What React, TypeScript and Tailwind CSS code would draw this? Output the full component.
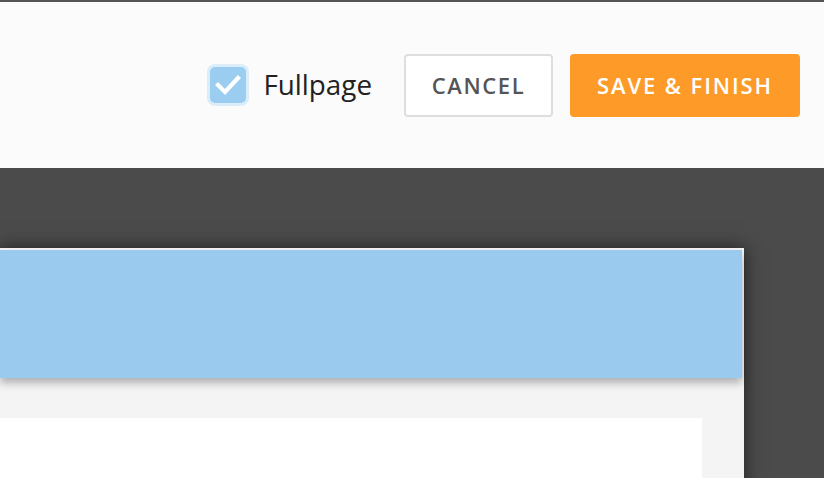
import React from "react";

export default function App() {
  return (
    <div
      className="w-[824px] h-[478px] overflow-hidden bg-[#4b4b4b] flex flex-col"
      style={{ fontFamily: '"Open Sans", "Liberation Sans", sans-serif' }}
    >
      <div className="h-[2px] bg-[#555555] shrink-0" />
      <header className="h-[166px] shrink-0 bg-[#fbfbfb] flex items-center justify-end pr-[24px]">
        <label className="flex items-center">
          <span className="w-[36px] h-[36px] rounded-[5px] bg-[#9bcdf0] flex items-center justify-center shadow-[0_0_0_3px_#dcedfa]">
            <svg width="30" height="26" viewBox="0 0 30 26">
              <polyline
                points="5,13 12,20 25,6"
                fill="none"
                stroke="#ffffff"
                strokeWidth="4.2"
                strokeLinecap="square"
              />
            </svg>
          </span>
          <span className="ml-[17px] text-[27.8px] text-[#222222] leading-none">Fullpage</span>
        </label>
        <button className="ml-[32px] w-[149px] h-[63px] rounded-[4px] border-2 border-[#dedede] bg-white text-[#555555] text-[22px] font-semibold tracking-[1.6px] flex items-center justify-center">
          CANCEL
        </button>
        <button className="ml-[17px] w-[230px] h-[63px] rounded-[4px] bg-[#fe9a28] text-white text-[22px] font-semibold tracking-[1.9px] flex items-center justify-center">
          SAVE &amp; FINISH
        </button>
      </header>
      <main className="flex-1 pt-[80px]">
        <div className="w-[744px] h-[400px] bg-[#f4f4f4] pt-[2px] pr-[2px] shadow-[0_0_18px_rgba(0,0,0,0.55)]">
          <div className="h-[128px] bg-[#9acbef] shadow-[0_5px_8px_rgba(0,0,0,0.28)]" />
          <div className="mt-[40px] w-[702px] h-[200px] bg-white" />
        </div>
      </main>
    </div>
  );
}
